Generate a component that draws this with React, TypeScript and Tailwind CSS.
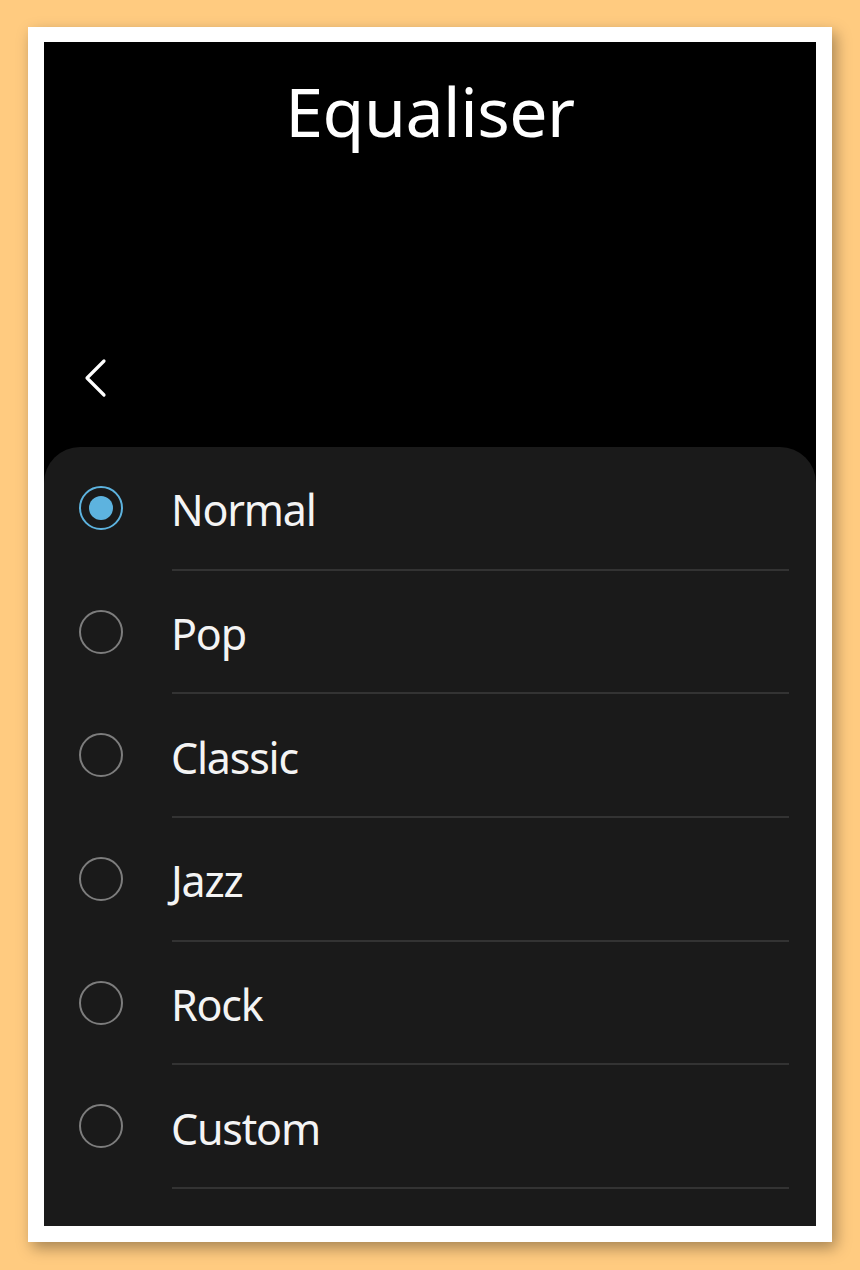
const presets = ['Normal', 'Pop', 'Classic', 'Jazz', 'Rock', 'Custom'];

function Radio({ checked }: { checked: boolean }) {
  if (checked) {
    return (
      <span className="flex h-[44px] w-[44px] items-center justify-center rounded-full border-[2.5px] border-[#5db3df]">
        <span className="h-[24px] w-[24px] rounded-full bg-[#5db3df]" />
      </span>
    );
  }
  return <span className="block h-[44px] w-[44px] rounded-full border-[2px] border-[#7d7d7d]" />;
}

export default function App() {
  return (
    <div
      className="min-h-[1270px] w-[860px] bg-[#ffcb80] pl-[28px] pt-[27px]"
      style={{ fontFamily: '"Noto Sans", "Open Sans", sans-serif' }}
    >
      <div className="h-[1215px] w-[804px] bg-white pb-[16px] pl-[16px] pr-[16px] pt-[15px] shadow-[4px_6px_14px_rgba(0,0,0,0.35)]">
        <div className="flex h-[1184px] w-[772px] flex-col bg-black">
          <div className="flex h-[405px] flex-col">
            <h1 className="pt-[24px] text-center text-[68px] leading-[90px] font-normal tracking-[-0.5px] text-white">
              Equaliser
            </h1>
            <button className="ml-[38px] mt-[202px] h-[40px] w-[30px]">
              <svg width="26" height="40" viewBox="0 0 26 40" fill="none">
                <path d="M22 3 L5 20 L22 37" stroke="white" strokeWidth="3.2" strokeLinecap="round" strokeLinejoin="round" />
              </svg>
            </button>
          </div>
          <div className="flex-1 rounded-t-[36px] bg-[#1a1a1a] pr-[27px]">
            {presets.map((name, i) => (
              <div key={name} className="flex h-[123.7px] flex-col">
                <div className="flex flex-1 items-center">
                  <div className="w-[127px] pl-[35px]">
                    <Radio checked={i === 0} />
                  </div>
                  <span className="pt-[4px] text-[43px] leading-none tracking-[-1.2px] text-[#f4f4f4]">{name}</span>
                </div>
                <div className="ml-[128px] h-[2px] bg-[#333333]" />
              </div>
            ))}
          </div>
        </div>
      </div>
    </div>
  );
}
